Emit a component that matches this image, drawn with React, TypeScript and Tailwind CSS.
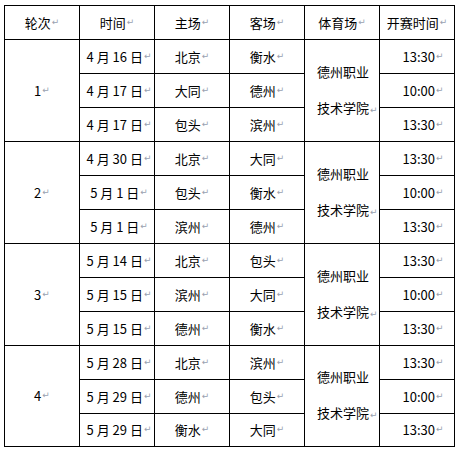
import React from 'react';

type Match = { date: string; home: string; away: string; time: string };

const rounds: { no: string; matches: Match[] }[] = [
    {
        no: '1',
        matches: [
            { date: '4 月 16 日', home: '北京', away: '衡水', time: '13:30' },
            { date: '4 月 17 日', home: '大同', away: '德州', time: '10:00' },
            { date: '4 月 17 日', home: '包头', away: '滨州', time: '13:30' },
        ],
    },
    {
        no: '2',
        matches: [
            { date: '4 月 30 日', home: '北京', away: '大同', time: '13:30' },
            { date: '5 月 1 日', home: '包头', away: '衡水', time: '10:00' },
            { date: '5 月 1 日', home: '滨州', away: '德州', time: '13:30' },
        ],
    },
    {
        no: '3',
        matches: [
            { date: '5 月 14 日', home: '北京', away: '包头', time: '13:30' },
            { date: '5 月 15 日', home: '滨州', away: '大同', time: '10:00' },
            { date: '5 月 15 日', home: '德州', away: '衡水', time: '13:30' },
        ],
    },
    {
        no: '4',
        matches: [
            { date: '5 月 28 日', home: '北京', away: '滨州', time: '13:30' },
            { date: '5 月 29 日', home: '德州', away: '包头', time: '10:00' },
            { date: '5 月 29 日', home: '衡水', away: '大同', time: '13:30' },
        ],
    },
];

// paragraph mark shown after each cell's text (Word "show marks" view)
const Mark = () => (
    <span className="ml-[1px] text-[9px] text-gray-400 font-['DejaVu_Sans',sans-serif]">↵</span>
);

const Cell = ({ children, className = '' }: { children: React.ReactNode; className?: string }) => (
    <div className={`bg-white flex items-center justify-center whitespace-pre ${className}`}>
        {children}
        <Mark />
    </div>
);

export default function App() {
    return (
        <div className="w-[458px] h-[451px] bg-white pl-[4px] pt-[5px] text-[13px] text-black font-['Noto_Sans_CJK_SC','Noto_Sans',sans-serif]">
            <div className="grid w-fit grid-cols-[repeat(6,74px)] grid-rows-[repeat(12,33px)_32px] gap-px bg-black p-px">
                {/* Header */}
                <Cell>轮次</Cell>
                <Cell>时间</Cell>
                <Cell>主场</Cell>
                <Cell>客场</Cell>
                <Cell>体育场</Cell>
                <Cell>开赛时间</Cell>

                {rounds.map((r) =>
                    r.matches.map((m, i) => (
                        <React.Fragment key={r.no + i}>
                            {i === 0 && <Cell className="row-span-3">{r.no}</Cell>}
                            <Cell className="pl-[4px]">{m.date}</Cell>
                            <Cell>{m.home}</Cell>
                            <Cell>{m.away}</Cell>
                            {i === 0 && (
                                <div className="row-span-3 bg-white flex flex-col justify-center pl-[12px] leading-[36px]">
                                    <div>德州职业</div>
                                    <div>
                                        技术学院
                                        <Mark />
                                    </div>
                                </div>
                            )}
                            <Cell className="pl-[12px]">{m.time}</Cell>
                        </React.Fragment>
                    ))
                )}
            </div>
        </div>
    );
}
